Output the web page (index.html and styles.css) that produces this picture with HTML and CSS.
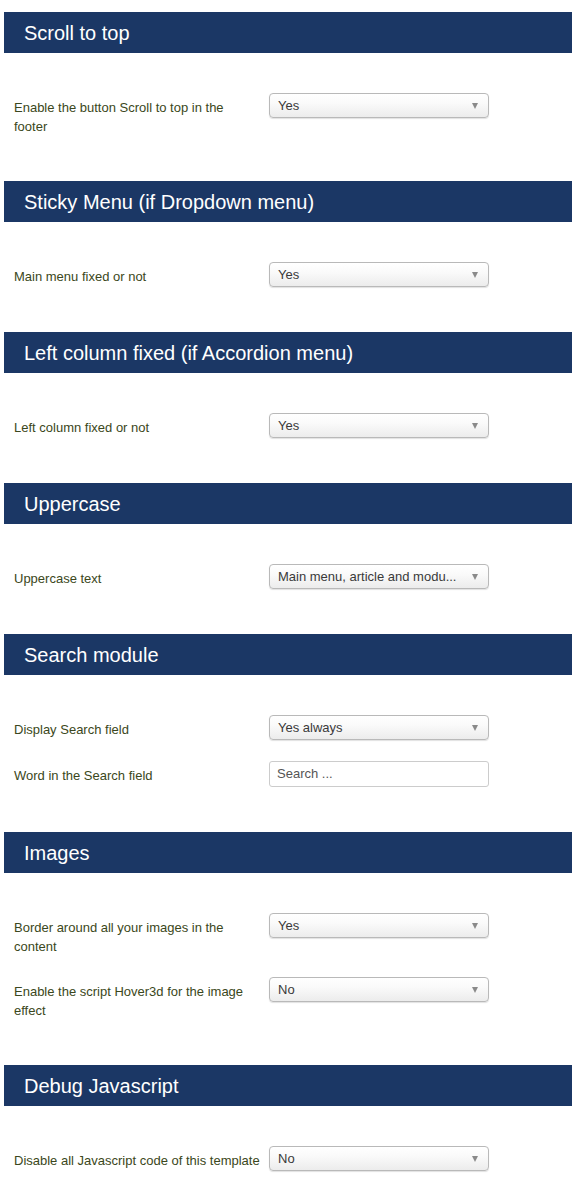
FILE: index.html
```html
<!DOCTYPE html>
<html>
<head>
<meta charset="utf-8">
<link rel="stylesheet" href="styles.css">
</head>
<body>
<div class="page">
  <section class="panel">
    <h2 class="panel-title">Scroll to top</h2>
    <div class="panel-body">
      <div class="row">
        <div class="label">Enable the button Scroll to top in the footer</div>
        <div class="select"><span class="select-text">Yes</span><span class="caret"></span></div>
      </div>
    </div>
  </section>
  <section class="panel">
    <h2 class="panel-title">Sticky Menu (if Dropdown menu)</h2>
    <div class="panel-body">
      <div class="row">
        <div class="label">Main menu fixed or not</div>
        <div class="select"><span class="select-text">Yes</span><span class="caret"></span></div>
      </div>
    </div>
  </section>
  <section class="panel">
    <h2 class="panel-title">Left column fixed (if Accordion menu)</h2>
    <div class="panel-body">
      <div class="row">
        <div class="label">Left column fixed or not</div>
        <div class="select"><span class="select-text">Yes</span><span class="caret"></span></div>
      </div>
    </div>
  </section>
  <section class="panel">
    <h2 class="panel-title">Uppercase</h2>
    <div class="panel-body">
      <div class="row">
        <div class="label">Uppercase text</div>
        <div class="select"><span class="select-text">Main menu, article and modu...</span><span class="caret"></span></div>
      </div>
    </div>
  </section>
  <section class="panel">
    <h2 class="panel-title">Search module</h2>
    <div class="panel-body">
      <div class="row">
        <div class="label">Display Search field</div>
        <div class="select"><span class="select-text">Yes always</span><span class="caret"></span></div>
      </div>
      <div class="row">
        <div class="label">Word in the Search field</div>
        <div class="input">Search ...</div>
      </div>
    </div>
  </section>
  <section class="panel">
    <h2 class="panel-title">Images</h2>
    <div class="panel-body">
      <div class="row">
        <div class="label">Border around all your images in the content</div>
        <div class="select"><span class="select-text">Yes</span><span class="caret"></span></div>
      </div>
      <div class="row">
        <div class="label">Enable the script Hover3d for the image effect</div>
        <div class="select"><span class="select-text">No</span><span class="caret"></span></div>
      </div>
    </div>
  </section>
  <section class="panel">
    <h2 class="panel-title">Debug Javascript</h2>
    <div class="panel-body">
      <div class="row">
        <div class="label">Disable all Javascript code of this template</div>
        <div class="select"><span class="select-text">No</span><span class="caret"></span></div>
      </div>
    </div>
  </section>
</div>
</body>
</html>
```
FILE: styles.css
```css
html, body {
  margin: 0;
  padding: 0;
  background: #ffffff;
}
body {
  font-family: "Liberation Sans", Arial, Helvetica, sans-serif;
}
.page {
  padding: 12px 0 0 4px;
}
.panel-title {
  margin: 0;
  height: 41px;
  box-sizing: border-box;
  padding: 0 0 0 20px;
  background: #1b3765;
  color: #ffffff;
  font-size: 20px;
  font-weight: normal;
  line-height: 43px;
}
.panel-body {
  padding: 40px 0 24px 10px;
}
.row {
  display: flex;
  align-items: flex-start;
  margin-bottom: 21px;
}
.label {
  flex: 0 0 246px;
  margin-right: 9px;
  padding-top: 5px;
  font-size: 13px;
  line-height: 19px;
  color: #3b4720;
}
.select {
  position: relative;
  box-sizing: border-box;
  width: 220px;
  height: 25px;
  border: 1px solid #b9b9b9;
  border-radius: 4px;
  background: linear-gradient(#ffffff 0%, #fafafa 40%, #ececec 100%);
  box-shadow: 0 1px 1px rgba(0, 0, 0, 0.12);
  padding: 0 24px 0 8px;
  font-size: 13px;
  line-height: 23px;
  color: #3a3a3a;
  white-space: nowrap;
}
.select-text {
  display: block;
}
.caret {
  position: absolute;
  right: 10px;
  top: 9px;
  width: 0;
  height: 0;
  border-left: 3.5px solid transparent;
  border-right: 3.5px solid transparent;
  border-top: 6px solid #8a8a8a;
}
.input {
  box-sizing: border-box;
  width: 220px;
  height: 26px;
  border: 1px solid #cccccc;
  border-radius: 3px;
  background: #ffffff;
  padding: 0 7px;
  font-size: 13px;
  line-height: 24px;
  color: #555555;
}
```
